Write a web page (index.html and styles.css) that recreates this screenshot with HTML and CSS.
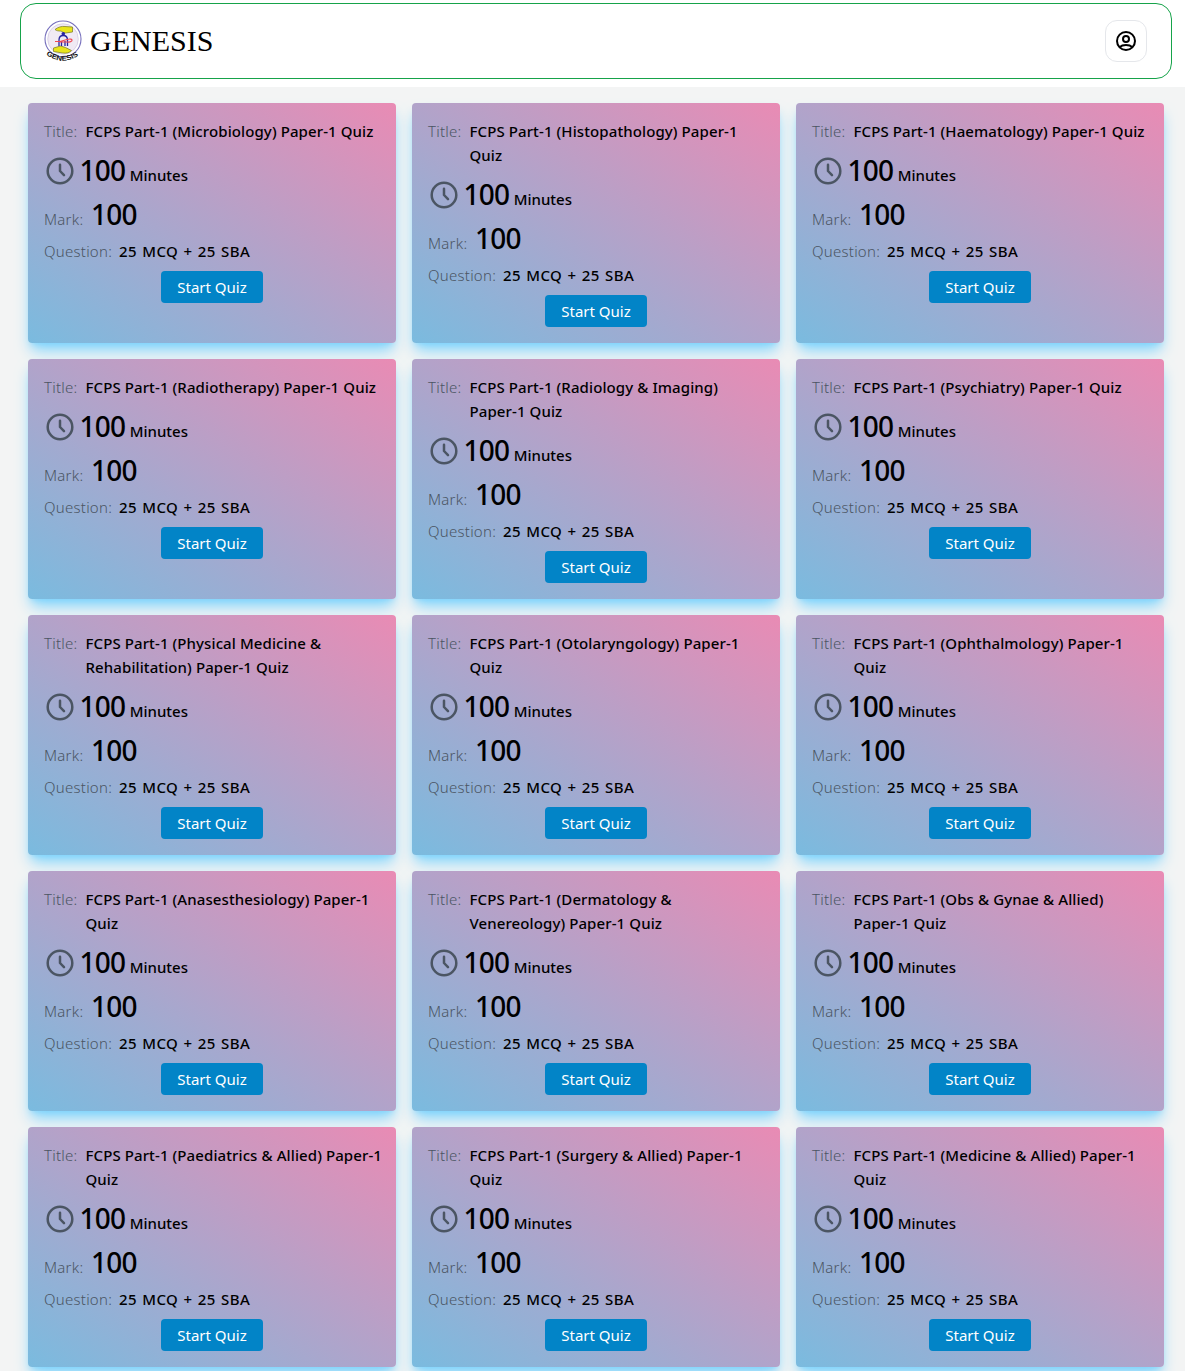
FILE: index.html
```html
<!DOCTYPE html>
<html lang="en">
<head>
<meta charset="utf-8">
<title>Genesis</title>
<link rel="stylesheet" href="styles.css">
</head>
<body>
<header class="header">
  <div class="navbar">
    <a class="brand">
      <svg class="logo" viewBox="0 0 38 42">
        <circle cx="19" cy="19" r="18" fill="#fff" stroke="#7770bd" stroke-width="1.1"/>
        <circle cx="19" cy="19" r="15.300" fill="#f0eaf4" stroke="#c9c0dc" stroke-width=".6"/>
        <path d="M11 9.500c3-2.500 7-3.500 10-3l7.500.5v5l-7 1c-2 .3-3-1.800-5-1.900-2-.2-4-.1-5.500-1.600z" fill="#e8e51c" stroke="#77751e" stroke-width=".7"/>
        <path d="M9.500 28l7-2 5 1.500 6 3c-2 2.300-5 3-9 2.500l-9-1.500z" fill="#e8e51c" stroke="#77751e" stroke-width=".7"/>
        <path d="M15 26v-6c0-6 8.500-6 8.500 0v6M17.500 26v-5M21 26v-5" fill="none" stroke="#2925a0" stroke-width="1.300"/>
        <circle cx="19.300" cy="13.800" r="1.800" fill="#2925a0"/>
        <path d="M11 21.500h5l7-2c7-2 6 3 1 2.500h-8" fill="none" stroke="#ee4b55" stroke-width="1.200"/>
        <path id="arc" d="M2 34.500Q19 47 36 34.500" fill="none"/>
        <text class="logo-text"><textPath href="#arc" textLength="35" lengthAdjust="spacingAndGlyphs">GENESIS</textPath></text>
      </svg>
      <span class="brand-name">GENESIS</span>
    </a>
    <button class="profile" aria-label="Profile">
      <svg viewBox="0 0 24 24" width="24" height="24" fill="none" stroke="#000" stroke-width="2">
        <circle cx="12" cy="12" r="9"/><circle cx="12" cy="10" r="3"/><path d="M5.500 18.200c3.300-2.900 9.700-2.900 13 0"/>
      </svg>
    </button>
  </div>
</header>
<main class="quiz-grid" id="quizzes"></main>
<template id="quiz-card">
  <article class="card">
    <div class="row"><span class="label title-label">Title:</span><span class="title"></span></div>
    <div class="time">
      <svg class="clock" viewBox="0 0 32 32"><circle cx="16" cy="16" r="12.300"/><path d="M16 9.800V16l4 4.200"/></svg>
      <span class="number">100</span><span class="minutes">Minutes</span>
    </div>
    <div class="mark"><span class="label mark-label">Mark:</span><span class="number">100</span></div>
    <div class="row"><span class="label question-label">Question:</span><span class="question">25 MCQ + 25 SBA</span></div>
    <button class="start">Start Quiz</button>
  </article>
</template>
<script src="script.js"></script>
</body>
</html>
```
FILE: styles.css
```css
* { box-sizing: border-box; }
body { margin: 0; background: #f3f4f4; color: #000; font: 500 15px/24px "Noto Sans", "Open Sans", sans-serif; }
button { font: inherit; margin: 0; }
.header { height: 87px; padding: 3px 13px 8px 20px; background: #fff; }
.navbar { height: 76px; border: 1px solid #16a34a; border-radius: 16px; padding: 0 24px 0 23px; display: flex; align-items: center; justify-content: space-between; }
.brand { display: flex; align-items: center; gap: 8px; }
.logo { width: 38px; height: 42px; overflow: visible; }
.logo-text { font: bold 7px "Liberation Sans", sans-serif; fill: #111; }
.brand-name { font: 400 30px/36px "Liberation Serif", serif; }
.profile { width: 42px; height: 42px; padding: 0; background: #fff; border: 1px solid #e5e7eb; border-radius: 12px; display: flex; align-items: center; justify-content: center; }
.quiz-grid { display: grid; grid-template-columns: repeat(3, 368px); grid-auto-rows: 240px; gap: 16px; padding: 16px 0 4px 28px; }
.card { padding: 16px 0 16px 16px; border-radius: 4px; background: linear-gradient(to top right, #7abbdf, #e98bb4); box-shadow: 0 10px 15px -3px #7dd3fc, 0 4px 6px -4px #7dd3fc; display: flex; flex-direction: column; gap: 8px; }
.row { display: flex; gap: 8px; }
.label { color: #4b5563; font-weight: 300; letter-spacing: .25px; flex: none; }
.title-label { width: 33.500px; }
.mark-label { width: 39px; }
.question-label { width: 67px; }
.title { width: 300px; white-space: pre-line; letter-spacing: .1px; }
.question { letter-spacing: .4px; word-spacing: 1px; }
.time { height: 40px; display: flex; align-items: baseline; line-height: 38px; }
.clock { width: 32px; height: 32px; align-self: center; margin-right: 4px; fill: none; stroke: #4b5563; stroke-width: 2.500; stroke-linecap: round; stroke-linejoin: round; }
.number { font-size: 28px; letter-spacing: -.8px; }
.time .number { margin-left: -.500px; }
.minutes { margin-left: 4.500px; }
.mark { height: 32px; display: flex; align-items: baseline; gap: 8px; line-height: 30px; }
.start { width: 102px; height: 32px; padding: 0; align-self: center; margin-right: 16px; border: 0; border-radius: 4px; background: #0284c7; color: #fff; font-weight: 400; }
```
FILE: script.js
```js
const titles = [
  "(Microbiology) Paper-1 Quiz",
  "(Histopathology) Paper-1\nQuiz",
  "(Haematology) Paper-1 Quiz",
  "(Radiotherapy) Paper-1 Quiz",
  "(Radiology & Imaging)\nPaper-1 Quiz",
  "(Psychiatry) Paper-1 Quiz",
  "(Physical Medicine &\nRehabilitation) Paper-1 Quiz",
  "(Otolaryngology) Paper-1\nQuiz",
  "(Ophthalmology) Paper-1\nQuiz",
  "(Anasesthesiology) Paper-1\nQuiz",
  "(Dermatology &\nVenereology) Paper-1 Quiz",
  "(Obs & Gynae & Allied)\nPaper-1 Quiz",
  "(Paediatrics & Allied) Paper-1\nQuiz",
  "(Surgery & Allied) Paper-1\nQuiz",
  "(Medicine & Allied) Paper-1\nQuiz"
];
const grid = document.getElementById("quizzes");
const template = document.getElementById("quiz-card");
for (const title of titles) {
  const card = template.content.cloneNode(true);
  card.querySelector(".title").textContent = "FCPS Part-1 " + title;
  grid.append(card);
}
```
